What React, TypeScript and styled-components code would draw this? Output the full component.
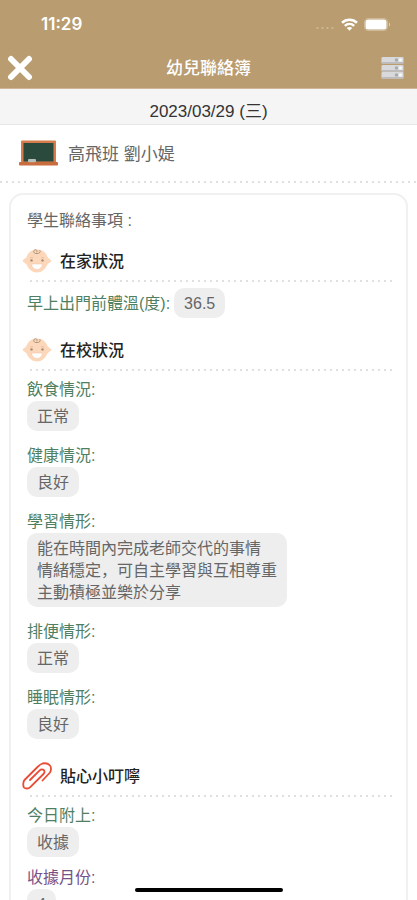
import React from 'react';
import styled, { createGlobalStyle } from 'styled-components';

const GlobalStyle = createGlobalStyle`
  *, *::before, *::after { box-sizing: border-box; }
  html, body, #root { height: 100%; }
  body {
    margin: 0;
    background: #fff;
    color: #666;
    font-family: "Liberation Sans", "Noto Sans CJK SC", sans-serif;
    font-size: 16px;
    line-height: 24px;
  }
`;

const Screen = styled.div`
  display: flex;
  flex-direction: column;
  height: 100vh;
  overflow: hidden;
`;

const Header = styled.header`
  flex: none;
  background: #b99c70;
  border-bottom: 1px solid #cdb798;
  color: #fff;
`;

const StatusBar = styled.div`
  display: flex;
  justify-content: space-between;
  align-items: center;
  height: 48px;
  padding: 0 26px 0 41px;
  font-family: Inter, sans-serif;
  font-size: 17px;
  font-weight: 600;
`;

const StatusIcons = styled.div`
  display: flex;
  align-items: center;
  gap: 6px;
`;

const NavBar = styled.nav`
  display: grid;
  grid-template-columns: 1fr auto 1fr;
  align-items: center;
  height: 40px;
  padding: 0 7px;
`;

const NavButton = styled.button<{ $end?: boolean }>`
  display: flex;
  justify-self: ${(p) => (p.$end ? 'end' : 'start')};
  padding: ${(p) => (p.$end ? '0 6px 0 0' : '0')};
  border: 0;
  background: none;
  cursor: pointer;
`;

const Title = styled.h1`
  margin: 0;
  padding-top: 2px;
  font-size: 17px;
  font-weight: 500;
  line-height: 24px;
`;

const DateBar = styled.div`
  flex: none;
  height: 36px;
  padding-top: 11px;
  background: #f5f5f5;
  border-bottom: 1px solid #e6e6e6;
  color: #333;
  font-size: 17px;
  text-align: center;
`;

const Content = styled.main`
  flex: 1;
  min-height: 0;
  overflow-y: auto;
  scrollbar-width: none;
`;

const Dots = styled.div<{ $inset?: boolean }>`
  height: 2px;
  margin: ${(p) => (p.$inset ? '0 5px 0 8px' : '0')};
  background: repeating-linear-gradient(90deg, #e0e0e0 0 2px, transparent 2px 6px);
`;

const Student = styled.div`
  display: flex;
  align-items: center;
  gap: 10px;
  height: 56px;
  padding-left: 19px;
  font-size: 17px;
`;

const StudentName = styled.span`
  padding-top: 3px;
`;

const Card = styled.section`
  margin: 10px 9px;
  padding: 14px 9px 40px 11px;
  border: 2px solid #f0f0f0;
  border-radius: 14px;
`;

const CardTitle = styled.p`
  margin: 0 0 8px 5px;
`;

const Group = styled.section<{ $spaced?: boolean }>`
  padding-top: ${(p) => (p.$spaced ? '5px' : '0')};
`;

const GroupHead = styled.div`
  display: flex;
  align-items: center;
  gap: 8px;
  height: 39px;
`;

const GroupTitle = styled.h2`
  margin: 0;
  padding-top: 3px;
  color: #222;
  font-size: 16px;
  font-weight: 500;
  line-height: 24px;
`;

const Fields = styled.dl`
  margin: 0;
  padding: 6px 0 0 5px;
`;

const Field = styled.div<{ $inline?: boolean; $tight?: boolean }>`
  display: flex;
  flex-direction: ${(p) => (p.$inline ? 'row' : 'column')};
  align-items: ${(p) => (p.$inline ? 'center' : 'flex-start')};
  column-gap: 4px;
  margin-bottom: ${(p) => (p.$tight ? '8px' : '12px')};
`;

const Label = styled.dt<{ $tone?: 'purple' }>`
  padding-top: 2px;
  color: ${(p) => (p.$tone === 'purple' ? '#765288' : '#4f7f62')};
  line-height: 22px;
`;

const Value = styled.dd`
  margin: 0;
  padding: 5px 10px 3px;
  border-radius: 10px;
  background: #eeeeee;
  line-height: 22px;
  white-space: pre-line;
`;

const HomeIndicator = styled.div`
  position: fixed;
  bottom: 8px;
  left: 50%;
  width: 148px;
  height: 4px;
  margin-left: -74px;
  border-radius: 2px;
  background: #000;
`;

const CloseIcon = () => (
  <svg width="26" height="26" viewBox="0 0 26 26" aria-hidden="true">
    <path d="M4 4 22 22M22 4 4 22" stroke="#fff" strokeWidth="6" strokeLinecap="round" />
  </svg>
);

const ListIcon = () => (
  <svg width="23" height="22" viewBox="0 0 23 22" aria-hidden="true">
    {[0, 8, 15].map((y) => (
      <g key={y}>
        <rect x="0.5" y={y} width="22" height="6.5" rx="1" fill="#d9d9db" />
        <rect x="0.5" y={y + 5} width="22" height="1.5" fill="#bcbcc0" />
        <circle cx="15.5" cy={y + 3} r="1.8" fill="#a5adb2" />
        <circle cx="19.5" cy={y + 3} r="1.8" fill="#f5f6f7" />
      </g>
    ))}
  </svg>
);

const SignalIcon = () => (
  <svg width="19" height="12" viewBox="0 0 19 12" aria-hidden="true">
    {[1.5, 6.5, 11.5, 16.5].map((x) => (
      <circle key={x} cx={x} cy="10" r="1.1" fill="#cfbb99" />
    ))}
  </svg>
);

const WifiIcon = () => (
  <svg width="17" height="13" viewBox="0 0 17 13" fill="none" stroke="#fff" aria-hidden="true">
    <path d="M1 4.8C5.2.8 11.8.8 16 4.8" strokeWidth="2.6" />
    <path d="M3.8 7.9c2.7-2.6 6.7-2.6 9.4 0" strokeWidth="2.3" />
    <path d="M8.5 12.8 5.7 10c1.6-1.4 4-1.4 5.6 0z" fill="#fff" stroke="none" />
  </svg>
);

const BatteryIcon = () => (
  <svg width="27" height="13" viewBox="0 0 27 13" aria-hidden="true">
    <rect x="0.5" y="0.5" width="23" height="12" rx="3.5" fill="none" stroke="#cfbb99" />
    <rect x="1.5" y="1.5" width="21" height="10" rx="2.5" fill="#fff" />
    <path d="M25 4.5c1.6.6 1.6 3.4 0 4z" fill="#dccdb5" />
  </svg>
);

const BoardIcon = () => (
  <svg width="39" height="26" viewBox="0 0 39 26" aria-hidden="true">
    <rect x="2" y="0.5" width="35" height="22" rx="1" fill="#d67c4c" />
    <rect x="4.5" y="3" width="30" height="18.5" fill="#294a3d" />
    <rect x="0" y="22" width="39" height="3.5" rx="1" fill="#c96c3e" />
    <rect x="9" y="19" width="8" height="3.2" rx="1" fill="#b5c0bd" />
  </svg>
);

const BabyIcon = () => (
  <svg width="30" height="26" viewBox="0 0 30 26" aria-hidden="true">
    <path
      d="M15 1.5C9.5 1.5 6.3 4.5 4.6 8.8 3.6 11 .8 11.3.8 12.8c0 1.6 2.6 2 3.9 4C7 21.5 10 24.500 15 24.500s8-3 10.300-7.700c1.300-2 3.900-2.400 3.900-4 0-1.500-2.800-1.800-3.800-4C23.700 4.500 20.500 1.500 15 1.500z"
      fill="#fcd7b9"
    />
    <path d="M15 5.5c-3.3.6-4.3-2.7-2.2-3.6 2-.8 3.4 1.8 1.5 2.2M15 5.5c2.6.2 3.8-1.6 2.8-3.3" fill="none" stroke="#a68d76" strokeWidth="0.9" />
    <circle cx="9.5" cy="12.4" r="1.2" fill="#a08a78" />
    <circle cx="20.5" cy="12.4" r="1.2" fill="#a08a78" />
    <path d="M8 10q1.500-1 3 0M19 10q1.500-1 3 0" fill="none" stroke="#dfb597" strokeWidth="0.7" />
    <path d="M9.500 16h11c-.3 3.600-2.700 5.500-5.500 5.500s-5.200-1.900-5.500-5.500z" fill="#fff" stroke="#f2bfa0" strokeWidth="0.5" />
  </svg>
);

const ClipIcon = () => (
  <svg width="30" height="28" viewBox="0 0 30 28" fill="none" stroke="#e94b35" strokeWidth="1.8" strokeLinecap="round" strokeLinejoin="round" aria-hidden="true">
    <path d="M20.500 18.500 28 10.500C29.300 8.500 29.300 5 28 3.500 26.500 1.500 23 1 20.500 1.500 18.500 2 17 3.500 15.500 5L2.500 18C1 19.500.9 24 2 25.500c1.300 1.400 4.500 1.300 6-.2L21.500 12c1.500-1.500 1.200-3 .2-4s-2.700-1-4 .3L8 18" />
  </svg>
);

type Item = { label: string; value: string; inline?: boolean; tight?: boolean; tone?: 'purple' };
type GroupData = { title: string; icon: React.ReactNode; spaced?: boolean; items: Item[] };

const groups: GroupData[] = [
  {
    title: '在家狀況',
    icon: <BabyIcon />,
    items: [{ label: '早上出門前體溫(度):', value: '36.5', inline: true }],
  },
  {
    title: '在校狀況',
    icon: <BabyIcon />,
    items: [
      { label: '飲食情況:', value: '正常' },
      { label: '健康情況:', value: '良好' },
      { label: '學習情形:', value: '能在時間內完成老師交代的事情\n情緒穩定，可自主學習與互相尊重\n主動積極並樂於分享' },
      { label: '排便情形:', value: '正常' },
      { label: '睡眠情形:', value: '良好' },
    ],
  },
  {
    title: '貼心小叮嚀',
    icon: <ClipIcon />,
    spaced: true,
    items: [
      { label: '今日附上:', value: '收據', tight: true },
      { label: '收據月份:', value: '4', tone: 'purple' },
    ],
  },
];

export default function App() {
  return (
    <Screen>
      <GlobalStyle />
      <Header>
        <StatusBar>
          <span>11:29</span>
          <StatusIcons>
            <SignalIcon />
            <WifiIcon />
            <BatteryIcon />
          </StatusIcons>
        </StatusBar>
        <NavBar>
          <NavButton type="button" aria-label="關閉">
            <CloseIcon />
          </NavButton>
          <Title>幼兒聯絡簿</Title>
          <NavButton type="button" aria-label="列表" $end>
            <ListIcon />
          </NavButton>
        </NavBar>
      </Header>
      <DateBar>2023/03/29 (三)</DateBar>
      <Content>
        <Student>
          <BoardIcon />
          <StudentName>高飛班 劉小媞</StudentName>
        </Student>
        <Dots />
        <Card>
          <CardTitle>學生聯絡事項 :</CardTitle>
          {groups.map((group) => (
            <Group key={group.title} $spaced={group.spaced}>
              <GroupHead>
                {group.icon}
                <GroupTitle>{group.title}</GroupTitle>
              </GroupHead>
              <Dots $inset />
              <Fields>
                {group.items.map((item) => (
                  <Field key={item.label} $inline={item.inline} $tight={item.tight}>
                    <Label $tone={item.tone}>{item.label}</Label>
                    <Value>{item.value}</Value>
                  </Field>
                ))}
              </Fields>
            </Group>
          ))}
        </Card>
      </Content>
      <HomeIndicator />
    </Screen>
  );
}
